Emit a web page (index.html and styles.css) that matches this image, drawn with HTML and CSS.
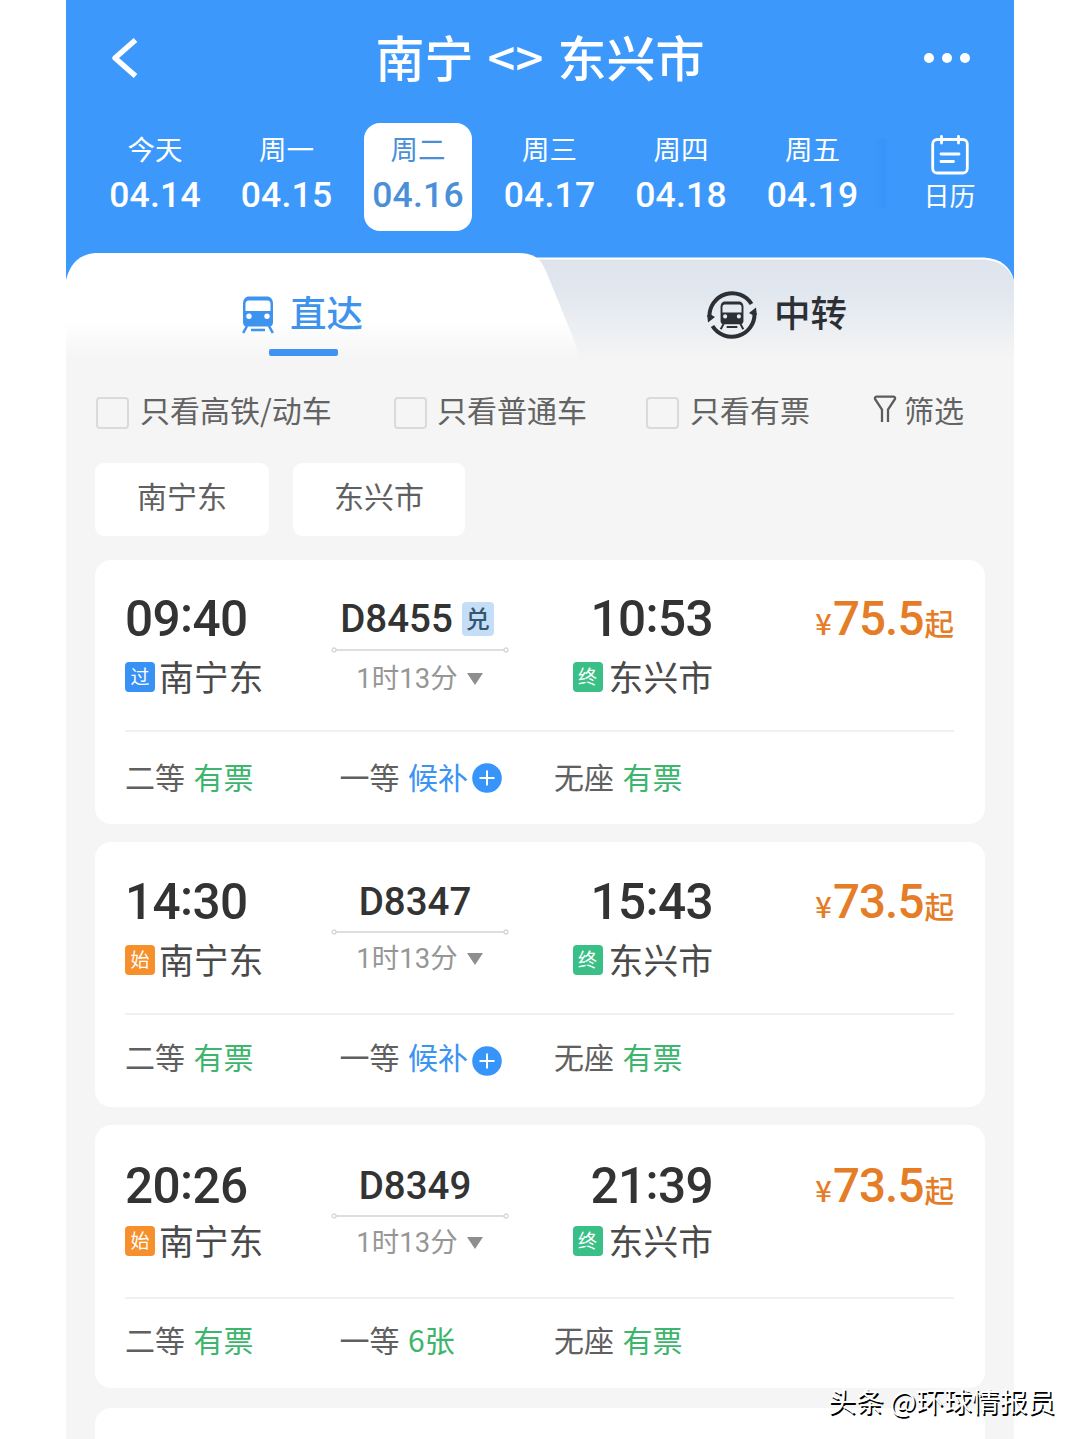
FILE: index.html
```html
<!DOCTYPE html>
<html lang="zh-CN">
<head>
<meta charset="utf-8">
<title>南宁 - 东兴市</title>
<link rel="stylesheet" href="styles.css">
</head>
<body>
<svg class="defs" width="0" height="0" aria-hidden="true">
  <symbol id="train" viewBox="0 0 32 38">
    <path fill="currentColor" fill-rule="evenodd" d="M6 0.5H26Q30.5 1.5 31 7V26Q31 30.500 27 30.500H5Q1 30.500 1 26V7Q1.500 1.500 6 0.500ZM6 4.500Q3.500 5 3.500 8V15H28.500V8Q28.500 5 26 4.500ZM7 17.500A2.700 2.700 0 1 0 7 22.900A2.700 2.700 0 1 0 7 17.500ZM25 17.500A2.700 2.700 0 1 0 25 22.900A2.700 2.700 0 1 0 25 17.500Z"/>
    <path fill="none" stroke="currentColor" stroke-width="2.600" d="M5 30L1.200 37M27 30L30.800 37M9 34H23"/>
  </symbol>
  <symbol id="plus" viewBox="0 0 30 30">
    <circle cx="15" cy="15" r="14.800" fill="#3794fb"/>
    <path stroke="#fff" stroke-width="2" d="M7.500 15H22.500M15 7.500V22.500"/>
  </symbol>
  <symbol id="track" viewBox="0 0 178 8">
    <path stroke="#dedede" stroke-width="2" d="M5 4H173"/>
    <circle cx="3" cy="4" r="2" fill="#fff" stroke="#d6d6d6" stroke-width="1.300"/>
    <circle cx="175" cy="4" r="2" fill="#fff" stroke="#d6d6d6" stroke-width="1.300"/>
  </symbol>
</svg>
<main class="app">
  <header class="header">
    <div class="titlebar">
      <svg class="back" viewBox="0 0 28 40" width="28" height="40"><path d="M25.500 2L5 20L25.500 38" fill="none" stroke="#fff" stroke-width="5.400" stroke-linejoin="round"/></svg>
      <h1 class="title">南宁 &lt;&gt; 东兴市</h1>
      <div class="more"><i></i><i></i><i></i></div>
    </div>
    <nav class="dates">
      <div class="day"><span>今天</span><b>04.14</b></div>
      <div class="day"><span>周一</span><b>04.15</b></div>
      <div class="day day--active"><span>周二</span><b>04.16</b></div>
      <div class="day"><span>周三</span><b>04.17</b></div>
      <div class="day"><span>周四</span><b>04.18</b></div>
      <div class="day"><span>周五</span><b>04.19</b></div>
      <i class="fade"></i>
      <div class="calendar">
        <svg viewBox="0 0 38 40" width="38" height="40" fill="none" stroke="#fff" stroke-linecap="round"><rect x="1.700" y="4.500" width="34.600" height="33.500" rx="4.500" stroke-width="2.800"/><path stroke-width="2.800" d="M10.500 1.500V8M27.500 1.500V8M10 19H28M10 26.500H22.500"/></svg>
        <span>日历</span>
      </div>
    </nav>
  </header>

  <div class="tabs">
    <svg class="tabs__bg" viewBox="0 0 948 112" width="948" height="112">
      <defs>
        <linearGradient id="gw" x1="0" y1="0" x2="0" y2="1"><stop offset="0.600" stop-color="#fff"/><stop offset="0.950" stop-color="#f5f5f5"/></linearGradient>
        <linearGradient id="gg" x1="0" y1="0" x2="0" y2="1"><stop offset="0" stop-color="#dfe4ec"/><stop offset="0.300" stop-color="#e1e7ef"/><stop offset="0.950" stop-color="#f5f5f5"/></linearGradient>
      </defs>
      <path fill="#3d98fc" d="M0 0H948V40H0Z"/>
      <path fill="#fff" d="M460 4.500H918Q942 6 948 27V60H460Z"/>
      <path fill="url(#gg)" d="M460 6.500H918Q941 8 948 28V112H460Z"/>
      <path fill="url(#gw)" d="M0 112V27Q6 2 29 0H453Q468 0 475 9L480 18L508 87L516 112Z"/>
    </svg>
    <div class="tab tab--active"><svg class="tab__train" width="32" height="38"><use href="#train"/></svg><span>直达</span></div>
    <div class="tab tab--transfer">
      <svg width="50" height="50" viewBox="0 0 50 50"><path fill="none" stroke="#2c3035" stroke-width="4" d="M2.500 27A22.700 22.700 0 0 1 44.500 14M47.500 23A22.700 22.700 0 0 1 5.500 36"/><path fill="#2c3035" d="M0.200 25L1 32.500L8 27L4.500 25ZM49.800 25L49 17.500L42 23L45.500 25Z"/><svg x="12" y="11" width="26" height="29" color="#2c3035"><use href="#train"/></svg></svg>
      <span>中转</span>
    </div>
  </div>

  <section class="filters">
    <label class="check check--fast"><i></i>只看高铁/动车</label>
    <label class="check check--normal"><i></i>只看普通车</label>
    <label class="check check--left"><i></i>只看有票</label>
    <div class="sift"><svg width="24" height="28" viewBox="0 0 24 28"><path d="M9 27V14.500L2 4Q1.500 2 3.500 1.700H20.500Q22.500 2 22 4L15 14.500V27" fill="none" stroke="#5c5c5c" stroke-width="2.300"/></svg>筛选</div>
  </section>
  <section class="chips"><span class="chip">南宁东</span><span class="chip">东兴市</span></section>

  <section class="list">
    <article class="card card--first">
      <div class="trip">
        <div class="stop"><time>09<s>:</s>40</time><p><em class="tag tag--pass">过</em>南宁东</p></div>
        <div class="train"><div class="no no--redeem"><span>D8455</span><em class="redeem">兑</em></div><svg class="track" width="178" height="8"><use href="#track"/></svg><div class="span">1时13分<i></i></div></div>
        <div class="stop stop--end"><time>10<s>:</s>53</time><p><em class="tag tag--end">终</em>东兴市</p></div>
        <div class="price"><small>¥</small><b>75.5</b><span>起</span></div>
      </div>
      <div class="seats">
        <div>二等<span class="ok">有票</span></div>
        <div>一等<span class="wait">候补</span><svg class="plus" width="30" height="30"><use href="#plus"/></svg></div>
        <div>无座<span class="ok">有票</span></div>
      </div>
    </article>
    <article class="card card--second">
      <div class="trip">
        <div class="stop"><time>14<s>:</s>30</time><p><em class="tag tag--start">始</em>南宁东</p></div>
        <div class="train"><div class="no"><span>D8347</span></div><svg class="track" width="178" height="8"><use href="#track"/></svg><div class="span">1时13分<i></i></div></div>
        <div class="stop stop--end"><time>15<s>:</s>43</time><p><em class="tag tag--end">终</em>东兴市</p></div>
        <div class="price"><small>¥</small><b>73.5</b><span>起</span></div>
      </div>
      <div class="seats">
        <div>二等<span class="ok">有票</span></div>
        <div>一等<span class="wait">候补</span><svg class="plus" width="30" height="30"><use href="#plus"/></svg></div>
        <div>无座<span class="ok">有票</span></div>
      </div>
    </article>
    <article class="card card--third">
      <div class="trip">
        <div class="stop"><time>20<s>:</s>26</time><p><em class="tag tag--start">始</em>南宁东</p></div>
        <div class="train"><div class="no"><span>D8349</span></div><svg class="track" width="178" height="8"><use href="#track"/></svg><div class="span">1时13分<i></i></div></div>
        <div class="stop stop--end"><time>21<s>:</s>39</time><p><em class="tag tag--end">终</em>东兴市</p></div>
        <div class="price"><small>¥</small><b>73.5</b><span>起</span></div>
      </div>
      <div class="seats">
        <div>二等<span class="ok">有票</span></div>
        <div>一等<span class="ok">6张</span></div>
        <div>无座<span class="ok">有票</span></div>
      </div>
    </article>
    <article class="card card--next"></article>
  </section>
</main>
<div class="watermark">头条 @环球情报员</div>
</body>
</html>
```
FILE: styles.css
```css
* { box-sizing: border-box; }
html, body { margin: 0; height: 1439px; overflow: hidden; background: #fff; }
body { position: relative; font-family: "Noto Sans CJK SC", sans-serif; color: #333; }
.defs { position: absolute; }
h1, p { margin: 0; }
em, i { font-style: normal; }
b { font-weight: 500; }
svg { display: block; flex: none; }
time, .day b, .no span, .price b, .span { font-family: Roboto, "Noto Sans CJK SC", sans-serif; }

.app { width: 948px; height: 1439px; margin-left: 66px; overflow: hidden; background: #f5f5f5; }

/* header */
.header { height: 253px; background: #3d98fc; color: #fff; }
.titlebar { display: flex; align-items: center; justify-content: space-between; height: 123px; padding: 0 44px 8px; }
.title { padding: 0 0 4px 18px; font-size: 49px; line-height: 60px; font-weight: 500; word-spacing: 3px; }
.more { display: flex; gap: 8px; }
.more i { width: 10px; height: 10px; border-radius: 50%; background: #fff; }
.dates { display: flex; padding-left: 35px; height: 108px; }
.day { width: 108px; margin-right: 23.500px; padding-top: 7px; border-radius: 16px; display: flex; flex-direction: column; align-items: center; }
.day span { font-size: 27.500px; line-height: 36px; }
.day b { margin-top: 10px; font-size: 35.500px; line-height: 38px; letter-spacing: 0.200px; white-space: nowrap; }
.day--active { background: #fff; color: #4a90d9; }
.fade { width: 14px; height: 70px; margin-top: 15px; margin-left: -16px; background: linear-gradient(90deg, rgba(40,130,230,0), rgba(40,135,235,.28) 70%, rgba(40,135,235,0)); }
.calendar { width: 60px; margin-left: 31.500px; padding-top: 12px; display: flex; flex-direction: column; align-items: center; }
.calendar span { margin-top: 2px; font-size: 26px; line-height: 36px; }

/* tabs */
.tabs { position: relative; display: flex; height: 112px; }
.tabs__bg { position: absolute; left: 0; top: 0; }
.tab { position: relative; display: flex; align-items: flex-start; font-size: 36.500px; line-height: 48px; font-weight: 500; }
.tab span { margin-top: 35px; }
.tab--active { width: 640px; padding-left: 176px; gap: 16px; color: #3e93ee; }
.tab__train { margin-top: 43px; }
.tab--active::after { content: ""; position: absolute; left: 203px; top: 96px; width: 69px; height: 7px; border-radius: 2px; background: #3e93f2; }
.tab--transfer { padding-left: 1px; gap: 17px; color: #2c3035; }
.tab--transfer > svg { margin-top: 37px; }

/* filters */
.filters { display: flex; align-items: center; height: 56px; margin-top: 16px; padding-left: 30px; font-size: 30px; line-height: 44px; color: #636363; white-space: nowrap; }
.check { display: flex; align-items: center; gap: 11px; }
.check i { width: 33px; height: 32px; margin-top: 7px; border: 2px solid #dadada; border-radius: 4px; }
.check--fast { width: 298px; }
.check--normal { width: 252px; gap: 10px; }
.check--left { width: 227px; }
.sift { display: flex; align-items: center; gap: 7px; }
.chips { display: flex; gap: 24px; margin-top: 26px; padding-left: 29px; }
.chip { width: 174px; height: 73px; border-radius: 9px; background: #fff; text-align: center; font-size: 30px; line-height: 64px; color: #606060; }
.chip + .chip { width: 172px; }

/* cards */
.list { padding: 24px 29px 0; }
.card { height: 264px; margin-bottom: 18px; padding: 0 31px 0 30px; border-radius: 16px; background: #fff; }
.card--second { --shift: 1px; --track: -1px; --dur: -2px; --seat: -3px; height: 265px; }
.card--third { --shift: 2px; --track: -1px; --dur: -2px; --seat: -4px; --station: -3px; height: 263px; margin-bottom: 20px; }
.trip { display: flex; height: calc(172px + var(--shift, 0px)); border-bottom: 2px solid #f0f0f0; }
.stop { width: 206px; padding-top: calc(34px + var(--shift, 0px)); }
.stop time { display: block; font-size: 49.500px; line-height: 50px; font-weight: 500; letter-spacing: -0.600px; }
time s { position: relative; top: -4px; text-decoration: none; }
.stop p { display: flex; align-items: center; gap: 4px; height: 44px; margin-top: calc(10px + var(--station, 0px)); font-size: 34.800px; line-height: 44px; color: #4a4a4a; white-space: nowrap; }
.tag { width: 30px; height: 30px; margin-top: 1px; border-radius: 4px; color: #fff; font-size: 19px; line-height: 28px; text-align: center; }
.tag--pass { background: #3891f5; }
.tag--start { background: #f5902c; }
.tag--end { background: #3abf87; }
.train { width: 178px; display: flex; flex-direction: column; align-items: center; }
.no { display: flex; align-items: center; gap: 9px; height: 40px; margin-top: calc(39px + var(--shift, 0px)); padding-right: 10px; font-size: 38.500px; line-height: 40px; font-weight: 500; }
.no--redeem { padding-right: 6px; }
.redeem { width: 32px; height: 34px; border-radius: 4px; background: #c5def8; color: #35566f; font-size: 24px; line-height: 32px; text-align: center; }
.track { margin-top: calc(7px + var(--track, 0px)); }
.span { display: flex; align-items: center; gap: 9px; margin-top: calc(5px + var(--dur, 0px)); margin-left: -1px; font-size: 27.500px; line-height: 40px; color: #969696; }
.span i { border: 8.500px solid transparent; border-top: 12px solid #8e8e8e; border-bottom: 0; }
.stop--end { padding-right: 2px; text-align: right; }
.stop--end p { justify-content: flex-end; gap: 6px; }
.price { flex: 1; display: flex; justify-content: flex-end; align-items: baseline; height: 60px; padding-top: calc(31px + var(--shift, 0px)); color: #e57d28; font-weight: 500; line-height: 56px; }
.price small { font-size: 29px; margin-right: 1px; }
.price b { font-size: 47.500px; letter-spacing: -0.900px; }
.price span { font-size: 29.500px; margin-left: 1px; }
.seats { display: grid; grid-template-columns: 214.500px 214.500px 1fr; padding-top: calc(22px + var(--seat, 0px)); font-size: 30px; line-height: 44px; color: #606060; white-space: nowrap; }
.seats > div { display: flex; align-items: center; }
.seats span { margin-left: 8.500px; }
.ok { color: #3db56c; }
.wait { color: #3b93f2; }
.plus { margin: 3px 0 0 3.500px; }
.card--second .plus { margin-top: 10px; }
.card--next { height: 60px; }

.watermark { position: absolute; right: 25px; bottom: 19px; font-size: 27.800px; line-height: 40px; color: #fff; text-shadow: 1.500px 1.500px 0 #000; white-space: nowrap; }
```
